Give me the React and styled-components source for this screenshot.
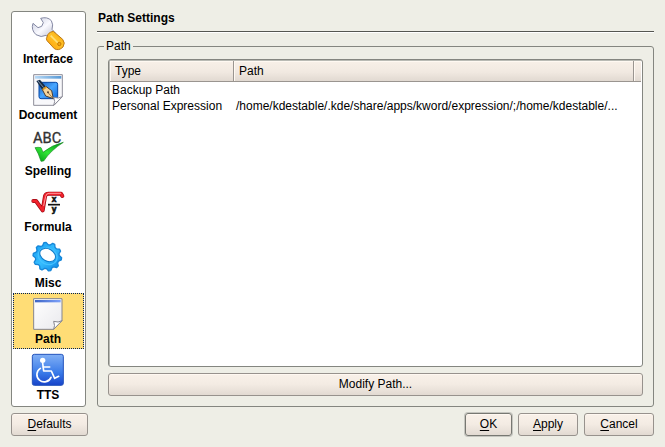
import React, { useState } from 'react'
import styled, { createGlobalStyle } from 'styled-components'

const GlobalStyle = createGlobalStyle`
* {
  box-sizing: border-box;
}
body {
  margin: 0;
  background: #eeeee6;
  color: #000;
  font: 12px/16px "Liberation Sans", Arial, sans-serif;
}
`;

const Dialog = styled.div`
min-height: 100vh;
padding: 11px;
display: flex;
flex-direction: column;
gap: 6px;
`;
const Body = styled.div`
flex: 1;
display: flex;
gap: 11px;
`;
const Sidebar = styled.nav`
width: 75px;
flex: none;
padding: 1px;
background: #fff;
border: 1px solid #848680;
border-radius: 3px;
`;
const SidebarItem = styled.button`
display: flex;
flex-direction: column;
align-items: center;
width: 100%;
height: 56px;
padding: 3px 1px 0 0;
border: 1px dotted ${props => props.$active ? '#00205a' : 'transparent'};
background: ${props => props.$active ? '#ffdd76' : 'transparent'};
color: #000;
font: bold 12px/16px "Liberation Sans", Arial, sans-serif;
`;
const Icon = styled.svg`
width: 32px;
height: 32px;
flex: none;
margin-bottom: 2px;
overflow: visible;
`;
const Main = styled.main`
flex: 1;
min-width: 0;
display: flex;
flex-direction: column;
`;
const Title = styled.h1`
margin: 0 0 6px;
padding: 0 1px 5px;
border-bottom: 1px solid #555651;
box-shadow: 0 1px #fff;
font-size: 12px;
line-height: 15px;
`;
const Group = styled.fieldset`
flex: 1;
min-width: 0;
margin: 0;
padding: 5px 10px 10px;
border: 1px solid #848680;
border-radius: 3px;
display: flex;
flex-direction: column;
gap: 6px;
`;
const GroupTitle = styled.legend`
margin-left: -4px;
padding: 0 2px;
`;
const ListBox = styled.div`
flex: 1;
padding: 1px;
background: #fff;
border: 1px solid #848680;
border-radius: 3px;
box-shadow: inset 1px 1px #b9bab4;
`;
const Table = styled.table`
width: 100%;
table-layout: fixed;
border-collapse: separate;
border-spacing: 0;
`;
const Column = styled.col`
width: ${props => props.$width};
`;
const HeadCell = styled.th`
height: 21px;
padding: 0 5px;
text-align: left;
font-weight: normal;
background: linear-gradient(#f8f0e8, #f1e9e1 55%, #e1d9d1);
border-bottom: 1px solid #9a9590;
border-right: ${props => props.$last ? '0' : '1px solid #9a9590'};
box-shadow: inset 1px 1px #fff9f2;
`;
const Cell = styled.td`
height: 16px;
padding: 0 2px;
white-space: nowrap;
overflow: hidden;
`;
const PushButton = styled.button`
height: 23px;
width: ${props => props.$width || 'auto'};
padding: 0 0 1px;
border: 1px solid ${props => props.$default ? '#777872' : '#97928d'};
border-radius: 3px;
background: linear-gradient(#f9f1e9, #f3ebe3 50%, #e2dad2);
box-shadow: inset 0 1px #fff8f1${props => props.$default ? ', 0 0 0 1px #c5c5bf' : ''};
color: #000;
font: 12px/16px "Liberation Sans", Arial, sans-serif;
`;
const Accel = styled.span`
text-decoration: underline;
text-underline-offset: 2px;
`;
const Footer = styled.footer`
display: flex;
gap: 6px;
`;
const Spacer = styled.div`
flex: 1;
`;

const WrenchIcon = () => (
  <Icon viewBox="0 0 96 96" aria-hidden="true">
    <defs>
      <linearGradient id="steel" x1="0" y1="0" x2="1" y2="1">
        <stop offset="0" stopColor="#c4c8dc" />
        <stop offset=".5" stopColor="#fafaff" />
        <stop offset="1" stopColor="#b4b8cc" />
      </linearGradient>
      <linearGradient id="handle" x1="0" y1="1" x2="1" y2="0">
        <stop offset="0" stopColor="#ff9900" />
        <stop offset=".55" stopColor="#ffc329" />
        <stop offset="1" stopColor="#f59a00" />
      </linearGradient>
    </defs>
    <path d="M3 19 L18 32 L29 28 L34 17 L26 4 Q46 -2 58 11 Q65 23 60 37 L69 47 L52 64 L42 55 Q28 63 12 53 Q-4 38 3 19Z" fill="url(#steel)" stroke="#8589a4" strokeWidth="3" />
    <path d="M45 60 Q47 46 64 43 L92 67 Q101 78 93 90 Q80 103 67 95 L45 71 Q41 65 45 60Z" fill="url(#handle)" stroke="#bd7b18" strokeWidth="3" />
    <path d="M56 56 L78 78" stroke="#ffe07b" strokeWidth="5" />
    <circle cx="82" cy="81" r="5" fill="#f7a818" stroke="#c67a00" strokeWidth="3" />
  </Icon>
)
const DocumentIcon = () => (
  <Icon viewBox="0 0 96 96" aria-hidden="true">
    <defs>
      <linearGradient id="docblue" x1="0" y1="0" x2="1" y2="1">
        <stop offset="0" stopColor="#1458bd" />
        <stop offset=".5" stopColor="#48a6ff" />
        <stop offset="1" stopColor="#0d67dd" />
      </linearGradient>
      <linearGradient id="docbar">
        <stop offset="0" stopColor="#b7d9f6" />
        <stop offset="1" stopColor="#5799d5" />
      </linearGradient>
    </defs>
    <path d="M5 5 H91 V71 L66 97 H5Z" fill="#f8f8fb" stroke="#8e8e9a" strokeWidth="3" />
    <rect x="9" y="9" width="79" height="8" fill="url(#docbar)" />
    <rect x="21" y="28" width="56" height="49" rx="6" fill="url(#docblue)" stroke="#0748a6" strokeWidth="3" />
    <path d="M13 24 L24 20 L42 42 L31 51Z" fill="#172c47" />
    <path d="M18 24 L35 44" stroke="#8094ae" strokeWidth="3" />
    <path d="M31 50 L43 41 L59 53 L64 77 L41 69Z" fill="#f6d49b" stroke="#493c34" strokeWidth="3" />
    <path d="M32 50 L43 42" stroke="#df9c24" strokeWidth="5" />
    <path d="M63 76 L49 60" stroke="#664b30" strokeWidth="2" />
    <circle cx="48" cy="58" r="3" fill="#54402f" />
    <path d="M65 97 Q71 86 65 73 Q79 78 91 71Z" fill="#fff" stroke="#8e8e9a" strokeWidth="3" />
  </Icon>
)
const SpellingIcon = () => (
  <Icon viewBox="0 0 96 96" aria-hidden="true">
    <defs>
      <linearGradient id="tick" x1="0" y1="1" x2="1" y2="0">
        <stop offset="0" stopColor="#009414" />
        <stop offset=".45" stopColor="#31e735" />
        <stop offset="1" stopColor="#008c1b" />
      </linearGradient>
    </defs>
    <text x="3" y="43" fontFamily="Roboto, sans-serif" fontSize="44" fontWeight="400" fill="#333" stroke="#333" strokeWidth="1">ABC</text>
    <path d="M9 56 Q19 54 27 56 L33 70 Q58 49 94 40 Q56 64 35 96 L27 97 Q20 73 9 56Z" fill="url(#tick)" stroke="#168c20" strokeWidth="2" />
  </Icon>
)
const FormulaIcon = () => (
  <Icon viewBox="0 0 96 96" aria-hidden="true">
    <g fill="none" strokeLinejoin="round" strokeLinecap="round">
      <path d="M4 48 H12 L32 76 L39 34 Q41 26 50 26 H87 L91 33" stroke="#9f0913" strokeWidth="12" />
      <path d="M4 48 H12 L32 76 L39 34 Q41 26 50 26 H87 L91 33" stroke="#f1222c" strokeWidth="8" />
      <path d="M35 62 L41 34 Q43 25 51 25 H86" stroke="#ff969b" strokeWidth="3" />
    </g>
    <g fontFamily="'Liberation Sans', sans-serif" fontSize="25" fontWeight="bold" fill="#111" stroke="#111" strokeWidth="2">
      <text x="59" y="51">x</text>
      <text x="59" y="80">y</text>
    </g>
    <path d="M48 59 H84" stroke="#111" strokeWidth="5" />
  </Icon>
)

// outline of a cog with ten rounded teeth
const cog = Array.from({ length: 40 }, (_, i) => {
  const angle = (i * 9 + 4) * Math.PI / 180
  const radius = i % 4 < 2 ? 43 : 36
  return `${46 + radius * Math.cos(angle)},${47 + radius * Math.sin(angle)}`
}).join(' ')

const GearIcon = () => (
  <Icon viewBox="0 0 96 96" aria-hidden="true">
    <defs>
      <linearGradient id="gear" x1="0" y1="0" x2="1" y2="1">
        <stop offset="0" stopColor="#159cf0" />
        <stop offset=".5" stopColor="#35bdff" />
        <stop offset="1" stopColor="#087fe0" />
      </linearGradient>
    </defs>
    <polygon points={cog} fill="url(#gear)" stroke="#1686d8" strokeWidth="4" strokeLinejoin="round" />
    <ellipse cx="47" cy="46" rx="29" ry="24" transform="rotate(25 47 46)" fill="none" stroke="#45c2ff" strokeWidth="4" />
    <ellipse cx="47" cy="42" rx="25" ry="18" transform="rotate(30 47 42)" fill="#fff" stroke="#107cca" strokeWidth="3" />
  </Icon>
)
const PathIcon = () => (
  <Icon viewBox="0 0 96 96" aria-hidden="true">
    <defs>
      <linearGradient id="paper" x1="0" y1="0" x2="1" y2="1">
        <stop offset="0" stopColor="#fff" />
        <stop offset="1" stopColor="#e9e9ed" />
      </linearGradient>
      <linearGradient id="pathbar">
        <stop offset="0" stopColor="#3d65c5" />
        <stop offset="1" stopColor="#7da1fa" />
      </linearGradient>
    </defs>
    <path d="M5 5 H90 V71 L65 97 H5Z" fill="url(#paper)" stroke="#85858e" strokeWidth="3" />
    <rect x="9" y="9" width="77" height="7" fill="url(#pathbar)" />
    <path d="M65 97 Q70 86 65 73 Q79 78 90 71Z" fill="#fff" stroke="#85858e" strokeWidth="3" />
  </Icon>
)
const SpeechIcon = () => (
  <Icon viewBox="0 0 96 96" aria-hidden="true">
    <defs>
      <linearGradient id="access" x1="0" y1="0" x2="0" y2="1">
        <stop offset="0" stopColor="#82b0f5" />
        <stop offset=".6" stopColor="#397ae8" />
        <stop offset="1" stopColor="#1743c9" />
      </linearGradient>
    </defs>
    <rect x="1" y="4" width="93" height="93" rx="6" fill="url(#access)" stroke="#2454bc" strokeWidth="3" />
    <circle cx="32" cy="22" r="8" fill="#fff" />
    <g fill="none" stroke="#fff" strokeWidth="5" strokeLinecap="round" strokeLinejoin="round">
      <path d="M32 30 L35 54 H58 L68 76 L80 70" />
      <path d="M34 42 H53" />
      <path d="M25 46 A22 22 0 1 0 57 73" />
    </g>
  </Icon>
)

const pages = [
  { name: 'Interface', icon: WrenchIcon },
  { name: 'Document', icon: DocumentIcon },
  { name: 'Spelling', icon: SpellingIcon },
  { name: 'Formula', icon: FormulaIcon },
  { name: 'Misc', icon: GearIcon },
  { name: 'Path', icon: PathIcon },
  { name: 'TTS', icon: SpeechIcon },
]
const paths = [
  { type: 'Backup Path', path: '' },
  { type: 'Personal Expression', path: '/home/kdestable/.kde/share/apps/kword/expression/;/home/kdestable/...' },
]

const App = () => {
const [page, setPage] = useState('Path');
  return (
    <>
      <GlobalStyle />
      <Dialog>
        <Body>
          <Sidebar>
            {pages.map(({ name, icon: PageIcon }) => (
              <SidebarItem key={name} type="button" $active={page === name} onClick={() => setPage(name)}>
                <PageIcon />
                {name}
              </SidebarItem>
            ))}
          </Sidebar>
          <Main>
            <Title>Path Settings</Title>
            <Group>
              <GroupTitle>Path</GroupTitle>
              <ListBox>
                <Table>
                  <colgroup>
                    <Column $width="124px" />
                    <Column />
                    <Column $width="7px" />
                  </colgroup>
                  <thead>
                    <tr>
                      <HeadCell>Type</HeadCell>
                      <HeadCell>Path</HeadCell>
                      <HeadCell as="td" $last />
                    </tr>
                  </thead>
                  <tbody>
                    {paths.map(row => (
                      <tr key={row.type}>
                        <Cell>{row.type}</Cell>
                        <Cell colSpan={2}>{row.path}</Cell>
                      </tr>
                    ))}
                  </tbody>
                </Table>
              </ListBox>
              <PushButton type="button">Modify Path...</PushButton>
            </Group>
          </Main>
        </Body>
        <Footer>
          <PushButton type="button" $width="77px"><Accel>D</Accel>efaults</PushButton>
          <Spacer />
          <PushButton type="button" $width="47px" $default><Accel>O</Accel>K</PushButton>
          <PushButton type="button" $width="60px"><Accel>A</Accel>pply</PushButton>
          <PushButton type="button" $width="70px"><Accel>C</Accel>ancel</PushButton>
        </Footer>
      </Dialog>
    </>
  )
}

export default App
